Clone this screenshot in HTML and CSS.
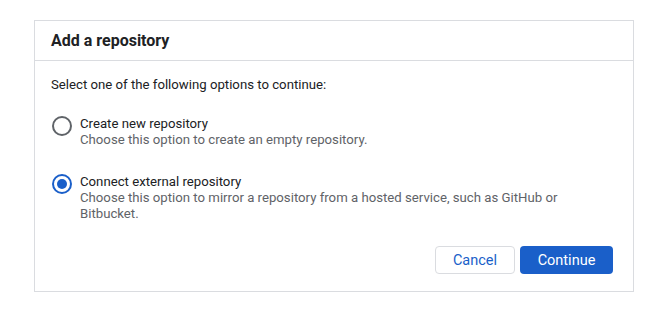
FILE: index.html
```html
<!DOCTYPE html>
<html lang="en">
<head>
  <meta charset="UTF-8" />
  <meta name="viewport" content="width=device-width, initial-scale=1.0" />
  <title>Add a repository</title>
  <link rel="stylesheet" href="styles.css">
</head>
<body>
  <div class="dialog">
    <div class="dialog-header">Add a repository</div>
    <div class="dialog-body">
      <p class="intro">Select one of the following options to continue:</p>

      <label class="option">
        <span class="radio"></span>
        <span class="option-text">
          <span class="option-title">Create new repository</span>
          <span class="option-desc">Choose this option to create an empty repository.</span>
        </span>
      </label>

      <label class="option">
        <span class="radio checked"></span>
        <span class="option-text">
          <span class="option-title">Connect external repository</span>
          <span class="option-desc">Choose this option to mirror a repository from a hosted service, such as GitHub or Bitbucket.</span>
        </span>
      </label>

      <div class="actions">
        <button class="btn btn-cancel">Cancel</button>
        <button class="btn btn-continue">Continue</button>
      </div>
    </div>
  </div>
</body>
</html>
```

FILE: styles.css
```css
body {
  font-family: Roboto, "Liberation Sans", sans-serif;
  background: #fff;
  color: #202124;
  margin: 0;
  padding: 20px 0 0 34px;
}
.dialog {
  width: 598px;
  border: 1px solid #dadce0;
  background: #fff;
}
.dialog-header {
  height: 39px;
  line-height: 40px;
  padding: 0 16px;
  font-size: 16px;
  font-weight: 700;
  border-bottom: 1px solid #dadce0;
}
.dialog-body {
  padding: 15px 20px 17px 16px;
}
.intro {
  margin: 0 0 22px;
  font-size: 13.2px;
  line-height: 18px;
}
.option {
  display: flex;
  gap: 8px;
  cursor: pointer;
}
.option + .option {
  margin-top: 26px;
}
.radio {
  flex: none;
  width: 16px;
  height: 16px;
  margin-left: 1px;
  border: 2px solid #5f6368;
  border-radius: 50%;
  position: relative;
}
.radio.checked {
  border-color: #1a5fc9;
}
.radio.checked::after {
  content: "";
  position: absolute;
  left: 3px;
  top: 3px;
  width: 10px;
  height: 10px;
  border-radius: 50%;
  background: #1a5fc9;
}
.option-text {
  display: flex;
  flex-direction: column;
  max-width: 480px;
  font-size: 13.2px;
  line-height: 16px;
}
.option-title {
  color: #202124;
}
.option-desc {
  color: #5f6368;
}
.actions {
  display: flex;
  justify-content: flex-end;
  gap: 5px;
  margin-top: 24px;
}
.btn {
  height: 28px;
  border-radius: 4px;
  font-family: inherit;
  font-size: 14.5px;
  cursor: pointer;
}
.btn-cancel {
  width: 80px;
  background: #fff;
  border: 1px solid #dadce0;
  color: #1a5fc9;
}
.btn-continue {
  width: 93px;
  background: #1a5fc9;
  border: none;
  color: #fff;
}
```
